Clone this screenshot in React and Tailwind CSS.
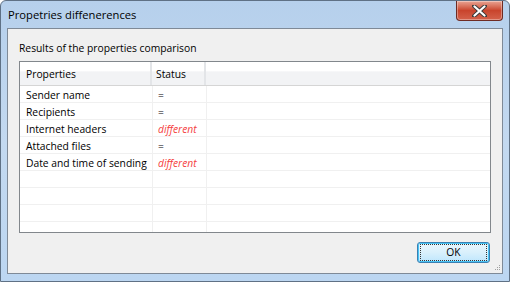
const rows = [
  { name: 'Sender name', status: '=' },
  { name: 'Recipients', status: '=' },
  { name: 'Internet headers', status: 'different' },
  { name: 'Attached files', status: '=' },
  { name: 'Date and time of sending', status: 'different' },
  { name: '', status: '' },
  { name: '', status: '' },
  { name: '', status: '' },
  { name: '', status: '' },
]

function CloseButton() {
  return (
    <div className="w-[47px] h-[20px] rounded-b-[4px] border border-t-0 border-[#6e2b23] bg-gradient-to-b from-[#e8a493] via-[#c9442c] to-[#d4614a] flex items-center justify-center shadow-[inset_0_0_0_1px_rgba(255,255,255,0.35)]">
      <svg width="15" height="12" viewBox="0 0 15 12">
        <path d="M2 1 L13 11 M13 1 L2 11" stroke="#3a3a3a" strokeWidth="4" strokeLinecap="round" />
        <path d="M2.5 1.5 L12.5 10.5 M12.5 1.5 L2.5 10.5" stroke="#ffffff" strokeWidth="2.2" strokeLinecap="round" />
      </svg>
    </div>
  )
}

export default function App() {
  return (
    <div className="w-[510px] h-[282px] bg-white whitespace-nowrap" style={{ fontFamily: '"Open Sans", "Noto Sans", sans-serif' }}>
      <div className="w-[510px] h-[282px] rounded-t-[6px] border border-[#5f7185] bg-gradient-to-b from-[#b6d0ec] via-[#c3d9f0] to-[#bcd6f1] flex flex-col">
        {/* Title bar */}
        <div className="h-[27px] flex justify-between items-start pl-[7px] pr-[6px]">
          <span className="text-[11.2px] text-black leading-none mt-[8px]">Propetries diffenerences</span>
          <CloseButton />
        </div>

        {/* Client area */}
        <div className="flex-1 mx-[6px] mb-[7px] border border-[#7f8a97] bg-[#f0f0f0] flex flex-col pt-[11px] px-[11px]">
          <div className="text-[10.3px] text-black leading-[16px]">Results of the properties comparison</div>

          {/* List */}
          <div className="mt-[5px] h-[172px] border border-[#82878c] bg-white overflow-hidden text-[10.3px] text-black">
            <div className="flex h-[24px] border-b border-[#d5d5d5] bg-[linear-gradient(to_bottom,#ffffff_0,#ffffff_40%,#f2f3f5_42%,#f2f3f5_100%)]">
              <div className="w-[132px] pl-[6px] pt-[3px] flex items-center border-r-2 border-[#e3e5e8]">Properties</div>
              <div className="w-[54px] pl-[4px] pt-[3px] flex items-center border-r-2 border-[#e3e5e8]">Status</div>
              <div className="flex-1"></div>
            </div>
            {rows.map((r, i) => (
              <div key={i} className="flex h-[17px] border-b border-[#f0f0f0] leading-[17px]">
                <div className="w-[133px] pl-[6px] pt-[1px] border-r border-[#f0f0f0]">{r.name}</div>
                <div
                  className={
                    r.status === 'different'
                      ? 'w-[54px] pl-[5px] pt-[1px] border-r border-[#f0f0f0] italic text-[#f53f3f]'
                      : 'w-[54px] pl-[5px] pt-[1px] border-r border-[#f0f0f0]'
                  }
                >
                  {r.status}
                </div>
                <div className="flex-1"></div>
              </div>
            ))}
          </div>

          {/* Footer */}
          <div className="flex justify-end items-start mt-[9px] relative flex-1">
            <button className="w-[73px] h-[21px] mr-[1px] rounded-[3px] border border-[#3c7fb1] bg-gradient-to-b from-[#eaf6fd] via-[#d9f0fc] to-[#bee6fd] shadow-[inset_0_0_0_1px_#48c4f5] text-[10.3px] text-black leading-none flex items-center justify-center">
              <span className="px-[2px] outline-1 outline-dotted outline-[#333] w-[65px] h-[15px] flex items-center justify-center">OK</span>
            </button>
            <div className="absolute right-[-9px] bottom-[3px] grid grid-cols-3 gap-[1px]">
              <span></span><span></span><span className="w-[1px] h-[1px] bg-[#a0a0a0]"></span>
              <span></span><span className="w-[1px] h-[1px] bg-[#a0a0a0]"></span><span className="w-[1px] h-[1px] bg-[#a0a0a0]"></span>
              <span className="w-[1px] h-[1px] bg-[#a0a0a0]"></span><span className="w-[1px] h-[1px] bg-[#a0a0a0]"></span><span className="w-[1px] h-[1px] bg-[#a0a0a0]"></span>
            </div>
          </div>
        </div>
      </div>
    </div>
  )
}
